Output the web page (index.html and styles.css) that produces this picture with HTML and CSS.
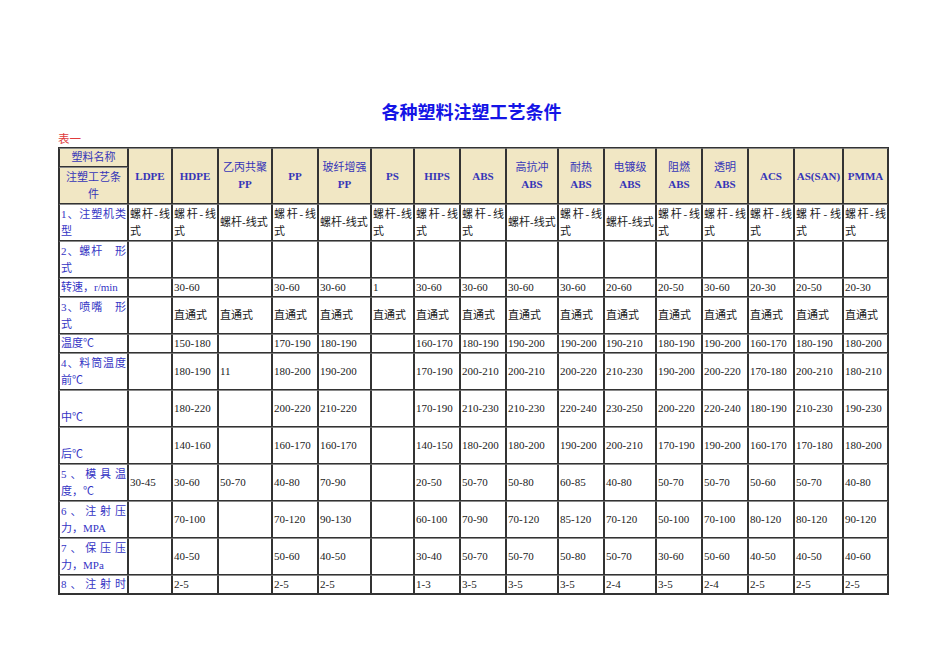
FILE: index.html
```html
<!DOCTYPE html>
<html lang="zh-CN">
<head>
<meta charset="utf-8">
<title>各种塑料注塑工艺条件</title>
<link rel="stylesheet" href="styles.css">
</head>
<body>
<div class="page">
  <h1 class="title">各种塑料注塑工艺条件</h1>
  <div class="caption">表一</div>
  <table class="grid">
    <colgroup>
      <col style="width:69px"><col style="width:44px"><col style="width:46px"><col style="width:54px">
      <col style="width:46px"><col style="width:53px"><col style="width:43px"><col style="width:46px">
      <col style="width:46px"><col style="width:52px"><col style="width:46px"><col style="width:52px">
      <col style="width:46px"><col style="width:46px"><col style="width:46px"><col style="width:49px">
      <col style="width:45px">
    </colgroup>
    <thead>
      <tr class="h1">
        <th class="corner">塑料名称</th>
        <th rowspan="2"><b>LDPE</b></th>
        <th rowspan="2"><b>HDPE</b></th>
        <th rowspan="2">乙丙共聚<br><b>PP</b></th>
        <th rowspan="2"><b>PP</b></th>
        <th rowspan="2">玻纤增强<br><b>PP</b></th>
        <th rowspan="2"><b>PS</b></th>
        <th rowspan="2"><b>HIPS</b></th>
        <th rowspan="2"><b>ABS</b></th>
        <th rowspan="2">高抗冲<br><b>ABS</b></th>
        <th rowspan="2">耐热<br><b>ABS</b></th>
        <th rowspan="2">电镀级<br><b>ABS</b></th>
        <th rowspan="2">阻燃<br><b>ABS</b></th>
        <th rowspan="2">透明<br><b>ABS</b></th>
        <th rowspan="2"><b>ACS</b></th>
        <th rowspan="2"><b>AS(SAN)</b></th>
        <th rowspan="2"><b>PMMA</b></th>
      </tr>
      <tr class="h2">
        <th class="corner">注塑工艺条件</th>
      </tr>
    </thead>
    <tbody>
      <tr class="tall">
        <td class="lab">1、注塑机类型</td>
        <td>螺杆-线式</td><td>螺杆-线式</td><td>螺杆-线式</td><td>螺杆-线式</td><td>螺杆-线式</td><td>螺杆-线式</td><td>螺杆-线式</td><td>螺杆-线式</td><td>螺杆-线式</td><td>螺杆-线式</td><td>螺杆-线式</td><td>螺杆-线式</td><td>螺杆-线式</td><td>螺杆-线式</td><td>螺杆-线式</td><td>螺杆-线式</td>
      </tr>
      <tr class="tall">
        <td class="lab">2、螺杆　形式</td>
        <td></td><td></td><td></td><td></td><td></td><td></td><td></td><td></td><td></td><td></td><td></td><td></td><td></td><td></td><td></td><td></td>
      </tr>
      <tr class="short">
        <td class="lab">转速，r/min</td>
        <td></td><td>30-60</td><td></td><td>30-60</td><td>30-60</td><td>1</td><td>30-60</td><td>30-60</td><td>30-60</td><td>30-60</td><td>20-60</td><td>20-50</td><td>30-60</td><td>20-30</td><td>20-50</td><td>20-30</td>
      </tr>
      <tr class="tall">
        <td class="lab">3、喷嘴　形式</td>
        <td></td><td>直通式</td><td>直通式</td><td>直通式</td><td>直通式</td><td>直通式</td><td>直通式</td><td>直通式</td><td>直通式</td><td>直通式</td><td>直通式</td><td>直通式</td><td>直通式</td><td>直通式</td><td>直通式</td><td>直通式</td>
      </tr>
      <tr class="short">
        <td class="lab">温度℃</td>
        <td></td><td>150-180</td><td></td><td>170-190</td><td>180-190</td><td></td><td>160-170</td><td>180-190</td><td>190-200</td><td>190-200</td><td>190-210</td><td>180-190</td><td>190-200</td><td>160-170</td><td>180-190</td><td>180-200</td>
      </tr>
      <tr class="tall">
        <td class="lab">4、料筒温度前℃</td>
        <td></td><td>180-190</td><td>11</td><td>180-200</td><td>190-200</td><td></td><td>170-190</td><td>200-210</td><td>200-210</td><td>200-220</td><td>210-230</td><td>190-200</td><td>200-220</td><td>170-180</td><td>200-210</td><td>180-210</td>
      </tr>
      <tr class="tall">
        <td class="lab low">中℃</td>
        <td></td><td>180-220</td><td></td><td>200-220</td><td>210-220</td><td></td><td>170-190</td><td>210-230</td><td>210-230</td><td>220-240</td><td>230-250</td><td>200-220</td><td>220-240</td><td>180-190</td><td>210-230</td><td>190-230</td>
      </tr>
      <tr class="tall">
        <td class="lab low">后℃</td>
        <td></td><td>140-160</td><td></td><td>160-170</td><td>160-170</td><td></td><td>140-150</td><td>180-200</td><td>180-200</td><td>190-200</td><td>200-210</td><td>170-190</td><td>190-200</td><td>160-170</td><td>170-180</td><td>180-200</td>
      </tr>
      <tr class="tall">
        <td class="lab">5、模具温度，℃</td>
        <td>30-45</td><td>30-60</td><td>50-70</td><td>40-80</td><td>70-90</td><td></td><td>20-50</td><td>50-70</td><td>50-80</td><td>60-85</td><td>40-80</td><td>50-70</td><td>50-70</td><td>50-60</td><td>50-70</td><td>40-80</td>
      </tr>
      <tr class="tall">
        <td class="lab">6、注射压力，MPA</td>
        <td></td><td>70-100</td><td></td><td>70-120</td><td>90-130</td><td></td><td>60-100</td><td>70-90</td><td>70-120</td><td>85-120</td><td>70-120</td><td>50-100</td><td>70-100</td><td>80-120</td><td>80-120</td><td>90-120</td>
      </tr>
      <tr class="tall">
        <td class="lab">7、保压压力，MPa</td>
        <td></td><td>40-50</td><td></td><td>50-60</td><td>40-50</td><td></td><td>30-40</td><td>50-70</td><td>50-70</td><td>50-80</td><td>50-70</td><td>30-60</td><td>50-60</td><td>40-50</td><td>40-50</td><td>40-60</td>
      </tr>
      <tr class="short">
        <td class="lab spread">8、注射时</td>
        <td></td><td>2-5</td><td></td><td>2-5</td><td>2-5</td><td></td><td>1-3</td><td>3-5</td><td>3-5</td><td>3-5</td><td>2-4</td><td>3-5</td><td>2-4</td><td>2-5</td><td>2-5</td><td>2-5</td>
      </tr>
    </tbody>
  </table>
</div>
</body>
</html>
```

FILE: styles.css
```css
html, body {
  margin: 0;
  padding: 0;
  background: #ffffff;
}

body {
  font-family: "Liberation Serif", "Noto Sans CJK SC", serif;
  font-size: 11px;
  color: #1a1a1a;
}

.page {
  padding: 99px 0 0 58px;
  width: 831px;
}

.title {
  margin: 0;
  font-family: "Noto Sans CJK SC", sans-serif;
  font-size: 18px;
  line-height: 24px;
  font-weight: bold;
  color: #1414e6;
  text-align: center;
  width: 827px;
}

.caption {
  margin-top: 8px;
  font-family: "Noto Sans CJK SC", sans-serif;
  font-size: 11.5px;
  line-height: 14px;
  color: #e03c3c;
  margin-bottom: 2px;
}

.grid {
  table-layout: fixed;
  width: 831px;
  border-collapse: separate;
  border-spacing: 0;
  border: 1px solid #333333;
}

.grid th,
.grid td {
  border: 1px solid #333333;
  border-top-color: #8a8a8a;
  padding: 0 1px;
  line-height: 17px;
  vertical-align: middle;
  overflow: hidden;
}

.grid th {
  background: #f1e7c4;
  color: #3535b8;
  font-weight: normal;
  text-align: center;
}

.grid th b {
  font-weight: bold;
}

.grid .h1 { height: 19px; }
.grid .h2 { height: 37px; }

.grid td {
  text-align: justify;
  color: #1a1a1a;
}

.grid .tall { height: 37px; }
.grid .short { height: 19px; }

.grid td.lab {
  color: #3434c4;
}

.grid td.low {
  vertical-align: bottom;
}

.grid td.spread {
  text-align-last: justify;
}
```
